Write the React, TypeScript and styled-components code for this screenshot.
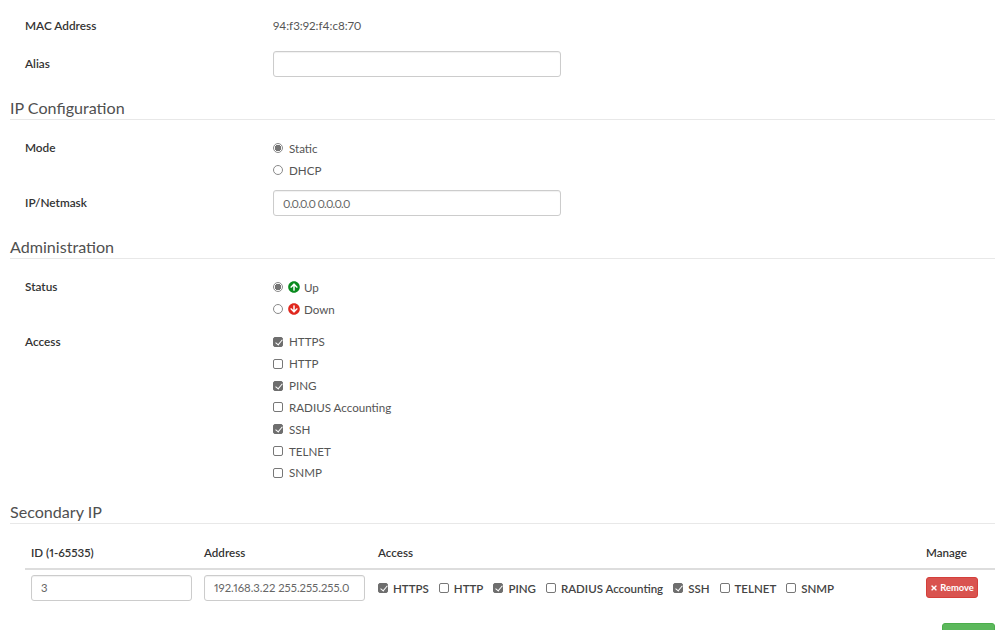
import styled, { createGlobalStyle } from "styled-components";
import { FaArrowCircleUp, FaArrowCircleDown, FaTimes } from "react-icons/fa";

const Global = createGlobalStyle`
    html, body {
        margin: 0;
        padding: 0;
        height: 630px;
        overflow: hidden;
        background: #fff;
        font-family: "Lato", "Liberation Sans", sans-serif;
        font-size: 12px;
        font-variant-numeric: proportional-nums;
        color: #555;
    }
    * {
        box-sizing: border-box;
    }
`;

const Page = styled.div`
    padding: 15px 4px 0 10px;
`;

const Row = styled.div<{ $mb?: number }>`
    display: grid;
    grid-template-columns: 263px 1fr;
    margin-bottom: ${(p) => p.$mb ?? 0}px;
`;

const Label = styled.div<{ $lh?: number }>`
    padding-left: 15px;
    font-size: 11.8px;
    font-weight: 600;
    color: #333;
    line-height: ${(p) => p.$lh ?? 22}px;
`;

const Value = styled.div`
    line-height: 22px;
    font-size: 11.6px;
    color: #555;
`;

const TextInput = styled.input<{ $tight?: boolean }>`
    display: block;
    height: 26px;
    width: 288px;
    padding: 0 9px;
    border: 1px solid #ccc;
    border-radius: 3px;
    background: #fff;
    color: #666;
    font: inherit;
    font-size: 11.3px;
    font-variant-numeric: proportional-nums;
    letter-spacing: ${(p) => (p.$tight ? "-0.7px" : "0")};
    outline: none;
    box-shadow: inset 0 1px 1px rgba(0, 0, 0, 0.06);
`;

const SectionTitle = styled.h3<{ $mb: number }>`
    margin: 0 0 ${(p) => p.$mb}px;
    height: 23px;
    border-bottom: 1px solid #e8e8e8;
    font-size: 16.1px;
    font-weight: 400;
    line-height: 22px;
    color: #505050;
`;

const Options = styled.div`
    display: flex;
    flex-direction: column;
`;

const Option = styled.label`
    display: flex;
    align-items: center;
    gap: 6px;
    height: 22px;
    color: #555;
    font-size: 11.6px;
`;

const CheckOption = styled(Option)`
    height: 21.83px;
`;

const Radio = styled.input.attrs({ type: "radio" })`
    appearance: none;
    width: 10px;
    height: 10px;
    margin: 0;
    border: 1px solid #8a8a8a;
    border-radius: 50%;
    background: #fff;
    flex: none;
    &:checked {
        background: radial-gradient(circle, #747474 0 3px, #fff 3.5px);
    }
`;

const Checkbox = styled.input.attrs({ type: "checkbox" })`
    appearance: none;
    position: relative;
    width: 10px;
    height: 10px;
    margin: 0;
    border: 1px solid #777;
    border-radius: 2px;
    background: #fff;
    flex: none;
    &:checked {
        background: #6e6e6e;
        border-color: #6e6e6e;
    }
    &:checked::after {
        content: "";
        position: absolute;
        left: 2.5px;
        top: 0;
        width: 3px;
        height: 6px;
        border: solid #fff;
        border-width: 0 1.5px 1.5px 0;
        transform: rotate(40deg);
    }
`;

const StatusIcon = styled.span<{ $color: string }>`
    display: inline-flex;
    margin: 0 -2px 0 -1px;
    color: ${(p) => p.$color};
    font-size: 12px;
`;

const Table = styled.div`
    margin-left: 15px;
`;

const TableHead = styled.div`
    display: grid;
    grid-template-columns: 173px 174px 548px 1fr;
    height: 26px;
    padding-left: 6px;
    border-bottom: 2px solid #ddd;
    font-weight: 600;
    color: #333;
    font-size: 11.6px;
    line-height: 18px;
`;

const TableRow = styled.div`
    display: grid;
    grid-template-columns: 173px 174px 548px 1fr;
    align-items: center;
    padding: 5px 0 0 6px;
`;

const CellInput = styled(TextInput)`
    width: 161px;
`;

const AccessList = styled.div`
    display: flex;
    gap: 10px;
    padding-top: 1px;
`;

const AccessItem = styled.label`
    display: flex;
    align-items: center;
    gap: 5px;
    font-weight: 600;
    font-size: 11.5px;
    color: #444;
`;

const RemoveButton = styled.button`
    display: inline-flex;
    align-items: center;
    justify-content: center;
    gap: 2px;
    width: 52px;
    height: 21px;
    padding: 0;
    border: 1px solid #d43f3a;
    border-radius: 3px;
    background: #d9534f;
    color: #fff;
    font: inherit;
    font-size: 9.4px;
    font-weight: 700;
`;

const Footer = styled.div`
    display: flex;
    justify-content: flex-end;
    margin-top: 22px;
`;

const SaveButton = styled.button`
    width: 53px;
    height: 30px;
    border: 1px solid #4cae4c;
    border-radius: 3px;
    background: #5cb85c;
`;

const accessOptions = [
    { name: "HTTPS", on: true },
    { name: "HTTP", on: false },
    { name: "PING", on: true },
    { name: "RADIUS Accounting", on: false },
    { name: "SSH", on: true },
    { name: "TELNET", on: false },
    { name: "SNMP", on: false },
];

const App = () => {
    return (
        <Page>
            <Global />
            <Row $mb={14}>
                <Label>MAC Address</Label>
                <Value>94:f3:92:f4:c8:70</Value>
            </Row>
            <Row $mb={20}>
                <Label $lh={26}>Alias</Label>
                <TextInput readOnly />
            </Row>

            <SectionTitle $mb={17}>IP Configuration</SectionTitle>
            <Row $mb={9}>
                <Label>Mode</Label>
                <Options>
                    <Option><Radio name="mode" defaultChecked />Static</Option>
                    <Option><Radio name="mode" />DHCP</Option>
                </Options>
            </Row>
            <Row $mb={20}>
                <Label $lh={26}>IP/Netmask</Label>
                <TextInput readOnly $tight value="0.0.0.0 0.0.0.0" />
            </Row>

            <SectionTitle $mb={17}>Administration</SectionTitle>
            <Row $mb={11}>
                <Label>Status</Label>
                <Options>
                    <Option>
                        <Radio name="status" defaultChecked />
                        <StatusIcon $color="#0a8a1e"><FaArrowCircleUp /></StatusIcon>
                        Up
                    </Option>
                    <Option>
                        <Radio name="status" />
                        <StatusIcon $color="#e0281e"><FaArrowCircleDown /></StatusIcon>
                        Down
                    </Option>
                </Options>
            </Row>
            <Row $mb={17}>
                <Label>Access</Label>
                <Options>
                    {accessOptions.map((o) => (
                        <CheckOption key={o.name}>
                            <Checkbox defaultChecked={o.on} />
                            {o.name}
                        </CheckOption>
                    ))}
                </Options>
            </Row>

            <SectionTitle $mb={20}>Secondary IP</SectionTitle>
            <Table>
                <TableHead>
                    <div>ID (1-65535)</div>
                    <div>Address</div>
                    <div>Access</div>
                    <div>Manage</div>
                </TableHead>
                <TableRow>
                    <CellInput readOnly value="3" />
                    <CellInput readOnly value="192.168.3.22 255.255.255.0" />
                    <AccessList>
                        {accessOptions.map((o) => (
                            <AccessItem key={o.name}>
                                <Checkbox defaultChecked={o.on} />
                                {o.name}
                            </AccessItem>
                        ))}
                    </AccessList>
                    <div>
                        <RemoveButton><FaTimes size={8} />Remove</RemoveButton>
                    </div>
                </TableRow>
                <Footer>
                    <SaveButton />
                </Footer>
            </Table>
        </Page>
    );
};

export default App;
